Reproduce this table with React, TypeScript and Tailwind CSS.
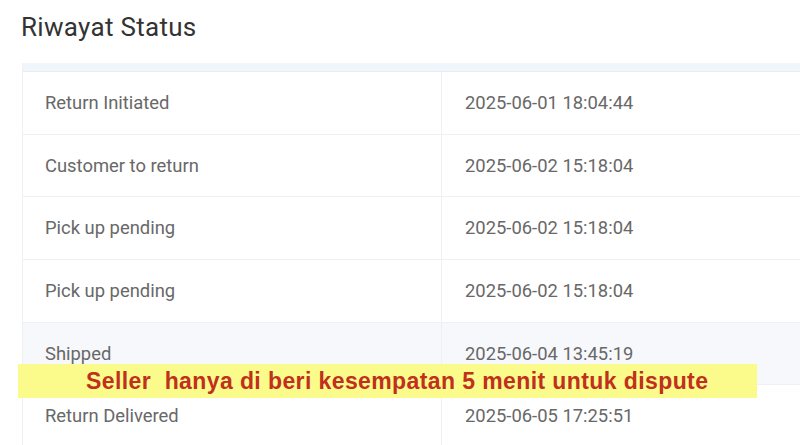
import React from 'react'

const rows = [
  { status: 'Return Initiated', time: '2025-06-01 18:04:44' },
  { status: 'Customer to return', time: '2025-06-02 15:18:04' },
  { status: 'Pick up pending', time: '2025-06-02 15:18:04' },
  { status: 'Pick up pending', time: '2025-06-02 15:18:04' },
  { status: 'Shipped', time: '2025-06-04 13:45:19', highlight: true },
  { status: 'Return Delivered', time: '2025-06-05 17:25:51' },
]

export default function App() {
  return (
    <div className="relative h-[445px] w-[800px] overflow-hidden bg-white font-['Roboto',sans-serif]">
      <div className="px-[21px] pt-[11px]">
        <h1 className="text-[26px] leading-[32px] tracking-[0.3px] text-[#333]">Riwayat Status</h1>
      </div>

      <div className="mt-[20px] ml-[22px] border-l border-[#eef0f3]">
        <div className="h-[9px] border-b border-[#e6edf6] bg-[#f1f6fc]" />
        {rows.map((row, i) => (
          <div
            key={i}
            className={`grid h-[62.7px] grid-cols-[419px_1fr] border-b border-[#eef0f3] ${row.highlight ? 'bg-[#f6f8fc]' : 'bg-white'}`}
          >
            <div className="flex items-center border-r border-[#eef0f3] pl-[22px] text-[18.4px] text-[#686868]">
              {row.status}
            </div>
            <div className="flex items-center pl-[23px] text-[18.4px] text-[#686868]">{row.time}</div>
          </div>
        ))}
      </div>

      <div className="absolute top-[364px] left-[18px] flex h-[34px] w-[739px] items-center bg-[#fbfb8c] pl-[68px]">
        <span className="font-['Liberation_Sans',sans-serif] text-[23px] font-bold tracking-[0.4px] text-[#c0301c]">
          Seller&nbsp; hanya di beri kesempatan 5 menit untuk dispute
        </span>
      </div>
    </div>
  )
}
